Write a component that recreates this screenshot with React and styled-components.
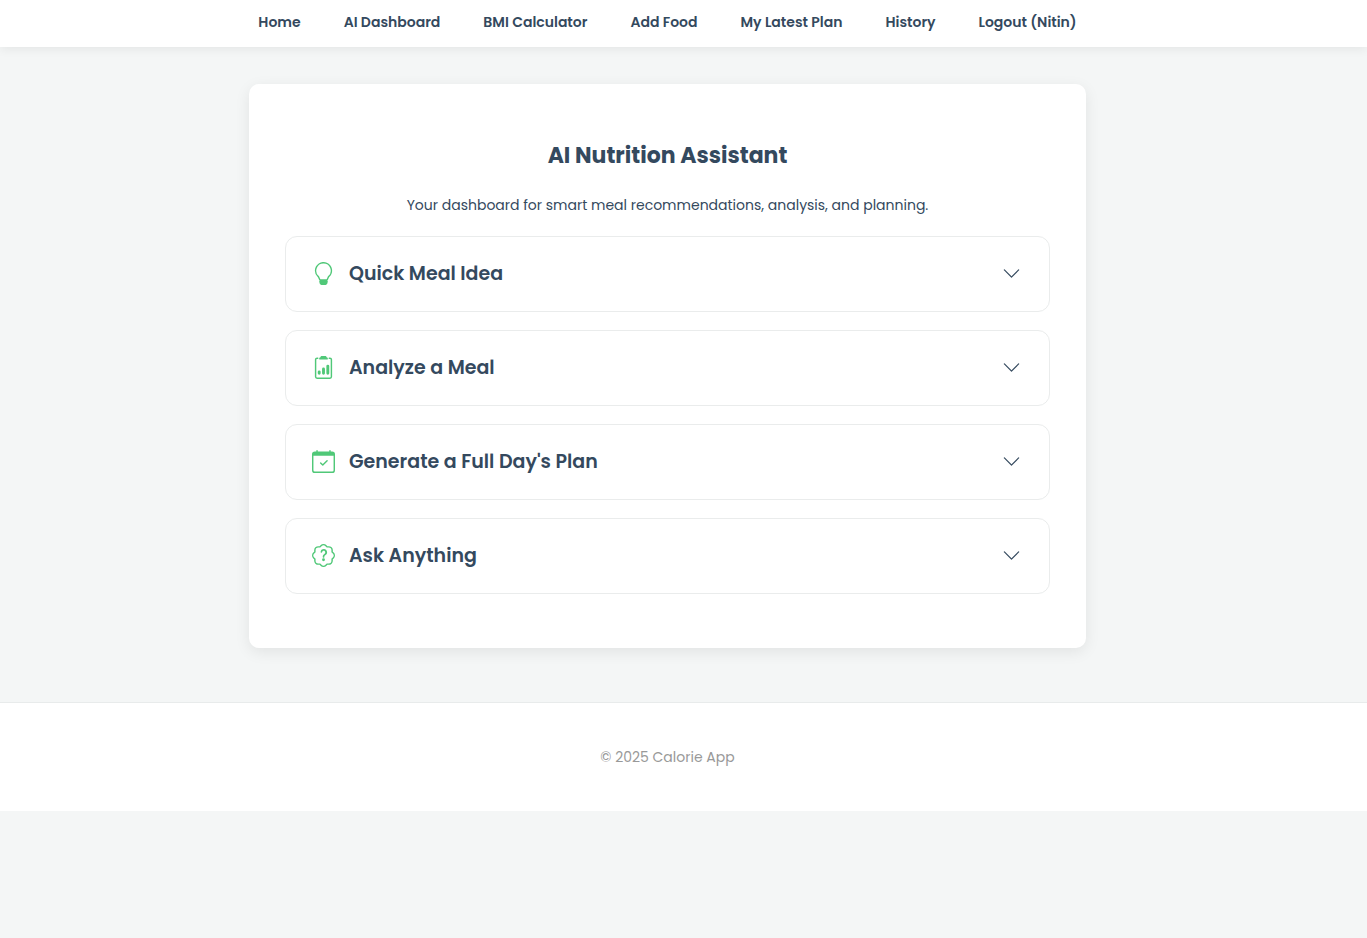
import React from "react";
import styled, { createGlobalStyle } from "styled-components";
import {
  BsLightbulb,
  BsClipboard2Data,
  BsCalendarCheck,
  BsPatchQuestion,
  BsChevronDown,
} from "react-icons/bs";

const GlobalStyle = createGlobalStyle`
  * { box-sizing: border-box; }
  body {
    margin: 0;
    background: #f4f6f6;
    color: #34495e;
    font-family: Poppins, Inter, "Open Sans", sans-serif;
    font-size: 14px;
    line-height: 24px;
  }
`;

const Header = styled.header`
  padding: 10px 32px 13px 0;
  background: #fff;
  box-shadow: 0 2px 10px rgba(0, 0, 0, 0.07);
`;

const Nav = styled.nav`
  display: flex;
  flex-wrap: wrap;
  justify-content: center;
  gap: 0 43px;
`;

const NavLink = styled.a`
  color: inherit;
  font-size: 14px;
  font-weight: 600;
  text-decoration: none;
`;

const Main = styled.main`
  padding: 37px 32px 54px 0;
`;

const Card = styled.section`
  width: 100%;
  max-width: 837px;
  margin: 0 auto;
  padding: 54px 36px;
  border-radius: 10px;
  background: #fff;
  box-shadow: 0 4px 15px rgba(0, 0, 0, 0.08);
`;

const Title = styled.h1`
  margin: 0;
  font-size: 22px;
  font-weight: 700;
  line-height: 36px;
  text-align: center;
`;

const Intro = styled.p`
  margin: 18px 0;
  line-height: 26px;
  text-align: center;
`;

const Panels = styled.div`
  display: grid;
  gap: 18px;
`;

const Panel = styled.button`
  display: flex;
  align-items: center;
  gap: 14px;
  width: 100%;
  height: 76px;
  padding: 0 28px 0 26px;
  border: 1px solid #eaecec;
  border-radius: 12px;
  background: #fff;
  color: inherit;
  font: inherit;
  text-align: left;
  cursor: pointer;
`;

const PanelIcon = styled.span`
  display: flex;
  padding-bottom: 2px;
  color: #50c878;
  font-size: 23px;
`;

const PanelTitle = styled.span`
  flex: 1;
  font-size: 19px;
  font-weight: 600;
`;

const Chevron = styled.span`
  display: flex;
  padding-bottom: 2px;
  font-size: 19px;
`;

const Footer = styled.footer`
  padding: 42px 32px 42px 0;
  border-top: 1px solid #e8ebeb;
  background: #fff;
  color: #999;
  text-align: center;
`;

const links = [
  "Home",
  "AI Dashboard",
  "BMI Calculator",
  "Add Food",
  "My Latest Plan",
  "History",
  "Logout (Nitin)",
];

const panels = [
  { title: "Quick Meal Idea", Icon: BsLightbulb },
  { title: "Analyze a Meal", Icon: BsClipboard2Data },
  { title: "Generate a Full Day's Plan", Icon: BsCalendarCheck },
  { title: "Ask Anything", Icon: BsPatchQuestion },
];

export default function App() {
  return (
    <>
      <GlobalStyle />
      <Header>
        <Nav>
          {links.map((label) => (
            <NavLink key={label} href="#">{label}</NavLink>
          ))}
        </Nav>
      </Header>
      <Main>
        <Card>
          <Title>AI Nutrition Assistant</Title>
          <Intro>Your dashboard for smart meal recommendations, analysis, and planning.</Intro>
          <Panels>
            {panels.map(({ title, Icon }) => (
              <Panel key={title} type="button" aria-expanded="false">
                <PanelIcon><Icon aria-hidden="true" /></PanelIcon>
                <PanelTitle>{title}</PanelTitle>
                <Chevron><BsChevronDown aria-hidden="true" /></Chevron>
              </Panel>
            ))}
          </Panels>
        </Card>
      </Main>
      <Footer>© 2025 Calorie App</Footer>
    </>
  );
}
